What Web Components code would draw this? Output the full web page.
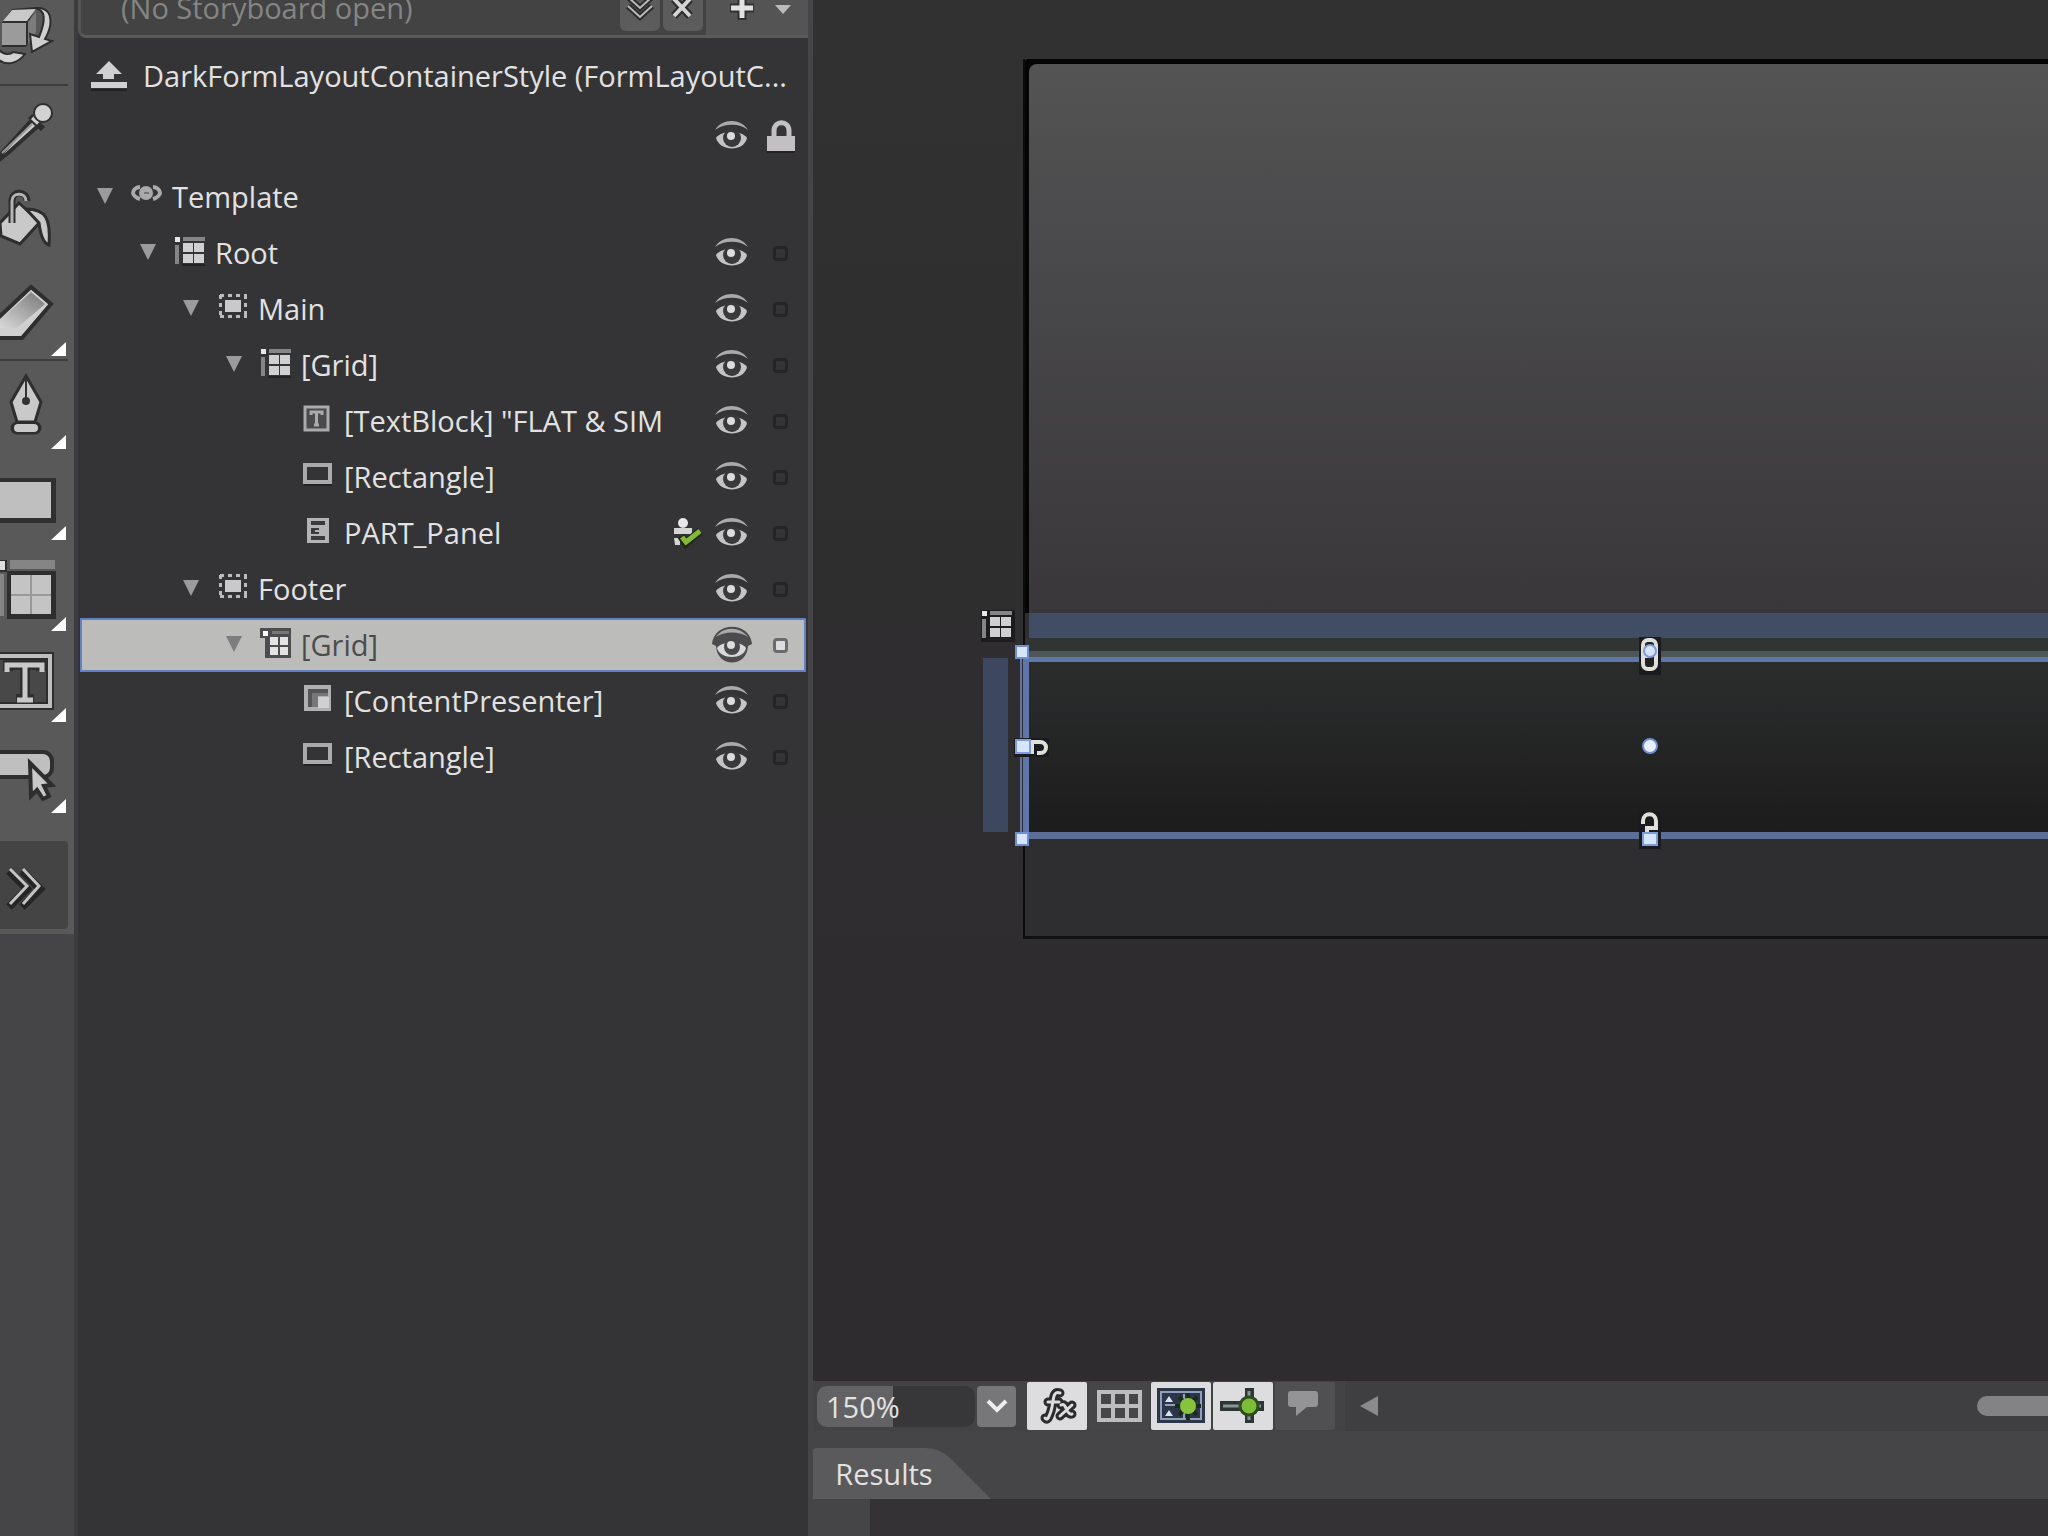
<!DOCTYPE html>
<html lang="en">
<head>
<meta charset="utf-8">
<title>Style editor</title>
<style>
body {
    margin: 0;
    background: #302f31;
    color: #e2e2e2;
    font-family: "Open Sans", "Noto Sans", sans-serif;
    font-size: 29px;
    line-height: 32px;
}
</style>
</head>
<body>
<style-editor></style-editor>

<script>
const SHARED = `
*, ::before, ::after {
    box-sizing: border-box;
}

button {
    display: flex;
    align-items: center;
    justify-content: center;
    margin: 0;
    padding: 0;
    border: 0;
    background: none;
    color: inherit;
    font: inherit;
}

svg {
    display: block;
    flex: none;
}
`

const define = (name, html, setup) => {
    const template = document.createElement('template')
    template.innerHTML = `<style>${SHARED}</style>${html}`

    window.customElements.define(name, class extends HTMLElement {
        constructor() {
            super()
            this.attachShadow({mode: 'open'})
            this.shadowRoot.appendChild(template.content.cloneNode(true))
            if (setup) setup(this, this.shadowRoot)
        }
    })
}

/* icons: [width, height, markup] */
const GRID = `
<path d="M1 1h5v5H1z" fill="#e8e8e8"/>
<path d="M9 1h22v4H9z" fill="#858487"/>
<path d="M1 9h4v19H1z" fill="#858487"/>
<path d="M9 7h10v9H9zM20 7h10v9H20zM9 18h10v9H9zM20 18h10v9H20z" fill="#d0cfd1"/>
<path d="M8 28h23v2H8z" fill="#222"/>`

const ICONS = {
    template: [32, 30, `
<path d="M9 7C4 7 2 11 2 13s3 5 7 6M22 7c5 0 7 4 7 6s-3 5-7 6" fill="none" stroke="#aaa9ab" stroke-width="4"/>
<circle cx="15" cy="13" r="7" fill="#a9a8aa"/>
<path d="M13 13h5" stroke="#777678" stroke-width="2"/>`],
    grid: [32, 30, GRID],
    selgrid: [32, 30, `
<path d="M0 0h31v30H5V10H0z" fill="#4d4d4f"/>
<path d="M3 3h5v5H3z" fill="#fff"/>
<path d="M12 3h17v3H12z" fill="#777"/>
<path d="M10 9h8v8h-8zM20 9h8v8h-8zM10 19h8v8h-8zM20 19h8v8h-8z" fill="#e4e4e4"/>`],
    border: [32, 30, `
<path d="M3 3.500h27M3 24.500h27M3.500 3v22M28.500 3v22" stroke="#bbbabc" stroke-width="3" stroke-dasharray="4 4"/>
<path d="M8 8h16v12H8z" fill="#c9c8ca"/>`],
    text: [32, 30, `
<path d="M2 3h23v23H2z" fill="#4a494b" stroke="#aaa9ab" stroke-width="3"/>
<path d="M8 11V8h11v3M13.500 9v12M11 21h5" fill="none" stroke="#aaa9ab" stroke-width="3"/>`],
    rect: [32, 30, `
<path d="M2 5h25v17H2z" fill="none" stroke="#aaa9ab" stroke-width="4"/>
<path d="M1 25h28" stroke="#222" stroke-width="2"/>`],
    panel: [32, 30, `
<path d="M4 2h22v25H4z" fill="#b4b3b5"/>
<path d="M8 5h14v4H8zM8 12h8v2h-4v2h4v2H8zM8 20h14v4H8z" fill="#3b3a3c"/>`],
    content: [32, 30, `
<path d="M1 1h27v26H1z" fill="#b0afb1"/>
<path d="M5 5h20v4H12v14H5z" fill="#555456"/>
<path d="M9 9h16v3H15v11H9z" fill="#777678"/>
<path d="M15 13h11v11H15z" fill="#d0cfd1"/>`],
    eye: [42, 40, `
<path d="M4 14C11 2 30 2 37 14C29 7 13 7 4 14z" fill="#a9a8aa"/>
<path d="M5 22C10 14 31 14 36 22C33 36 9 36 5 22z" fill="#c4c3c5"/>
<circle cx="21" cy="22" r="9" fill="#39383a"/>
<circle cx="20" cy="20" r="4" fill="#dcdbdd"/>`],
    seleye: [42, 40, `
<path d="M1 19C3 -4 39 -4 41 19L37 21C36 43 6 43 5 21z" fill="#4c4c4e"/>
<path d="M5 12C12 1 29 1 37 12C29 6 13 6 5 12z" fill="#a9a8aa"/>
<path d="M6 23C10 16 31 16 35 23C33 35 9 35 6 23z" fill="#d8d7d9"/>
<circle cx="21" cy="22" r="8" fill="#49484a"/>
<circle cx="20" cy="20" r="4" fill="#dcdbdd"/>`],
    lock: [30, 34, `
<path d="M8 17v-5c0-11 15-11 15 0v5" fill="none" stroke="#c2c0c2" stroke-width="5"/>
<path d="M1 17h28v15H1z" fill="#c2c0c2"/>
<path d="M1 33h28" stroke="#222" stroke-width="2"/>`],
    up: [38, 32, `
<path d="M19 1L32 14H24V19H13V14H6z" fill="#d0cfd1"/>
<path d="M1 22h36v6H1z" fill="#d0cfd1"/>
<path d="M1 30h36" stroke="#222" stroke-width="2"/>`],
    arrow: [18, 18, '<path d="M0 0h16L8 16z" fill="currentColor"/>'],
    part: [32, 32, `
<circle cx="11" cy="6" r="5" fill="#e8e8e8"/>
<path d="M2 11h18v6H2zM2 21h6v7H3z" fill="#d5d5d5"/>
<path d="M9 19l5 7L28 14" fill="none" stroke="#1e2a14" stroke-width="8"/>
<path d="M10 20l4 5L28 14" fill="none" stroke="#84b83a" stroke-width="5"/>`]
}

const TRI = '<path d="M51 88L66 74V88z" fill="#fff"/>'

/* toolbox glyphs share one 74x91 cell */
const TOOLS = {
    orbit: `
<path d="M2 30l10-14 24-2-6 12v22l-4 6H2z" fill="#2e2e2e"/>
<path d="M3 28l9-11 24-1-9 12z" fill="#c9c9c9"/>
<path d="M2 30h24v22H2z" fill="#9b9b9b"/>
<path d="M28 29l8-10v20l-8 12z" fill="#7c7c7c"/>
<path d="M34 15c12 1 12 12 5 29l-9-3 2 18 20-11-7-2c7-12 9-28-4-31z" fill="#cfcfcf" stroke="#2e2e2e" stroke-width="2"/>
<path d="M-1 57c5 5 11 5 14 2l12 2C19 69 8 74-1 67z" fill="#d2d2d2" stroke="#2e2e2e" stroke-width="2"/>`,
    dropper: `
<path d="M-1 70L32 34l6 6L8 67l-9 7z" fill="#c9c9c9" stroke="#2e2e2e" stroke-width="4"/>
<path d="M2 67L32 38" stroke="#999" stroke-width="2"/>
<path d="M30 30l13 13" stroke="#2e2e2e" stroke-width="6"/>
<path d="M34 36l8-9" stroke="#d2d2d2" stroke-width="8"/>
<circle cx="43" cy="27" r="9" fill="#d2d2d2" stroke="#2e2e2e" stroke-width="2"/>`,
    bucket: `
<path d="M0 46L19 26 40 45 20 67 1 59z" fill="#c9c9c9" stroke="#2e2e2e" stroke-width="3"/>
<path d="M12 46V24c0-11 15-10 15 0" fill="none" stroke="#2e2e2e" stroke-width="7"/>
<path d="M12 46V24c0-9 14-9 14 0" fill="none" stroke="#b4b4b4" stroke-width="3"/>
<path d="M26 32c20 0 25 10 23 36-7-2-9-14-10-22z" fill="#c9c9c9" stroke="#2e2e2e" stroke-width="3"/>`,
    eraser: `
<defs><linearGradient id="g" x1="1" y1="0" x2="0" y2="1"><stop stop-color="#777"/><stop offset="1" stop-color="#ddd"/></linearGradient></defs>
<path d="M-4 52L31 19 51 36 22 70H-4z" fill="#d0d0d0" stroke="#2e2e2e" stroke-width="4"/>
<path d="M-4 56L31 24 45 36 17 60H-4z" fill="url(#g)"/>` + TRI,
    pen: `
<path d="M26 15L41 41 35 61H17L11 41z" fill="#c9c9c9" stroke="#2e2e2e" stroke-width="3"/>
<path d="M26 18v22" stroke="#333" stroke-width="2"/>
<circle cx="26" cy="40" r="4" fill="#333"/>
<path d="M17 67h18" stroke="#2e2e2e" stroke-width="13" stroke-linecap="round"/>
<path d="M18 67h16" stroke="#c9c9c9" stroke-width="8" stroke-linecap="round"/>` + TRI,
    shape: `
<path d="M-2 26h58v45H-2z" fill="#303030"/>
<path d="M-2 30h53v36H-2z" fill="#bfbfbf"/>` + TRI,
    layout: `
<path d="M-2 17h9v12H-2zM7 28h49v48H7z" fill="#2e2e2e"/>
<path d="M-2 18h7v9H-2z" fill="#ddd"/>
<path d="M10 17h45v9H10z" fill="#858585"/>
<path d="M-2 31h6v42H-2z" fill="#858585"/>
<path d="M11 32h40v39H11z" fill="#999"/>
<path d="M11 32h19v19H11zM32 32h19v19H32zM11 53h19v18H11zM32 53h19v18H32z" fill="#c4c4c4"/>` + TRI,
    type: `
<path d="M-4 22h54v50H-4z" fill="#484848" stroke="#2e2e2e" stroke-width="8"/>
<path d="M-4 22h54v50H-4z" fill="none" stroke="#bfbfbf" stroke-width="4"/>
<path d="M8 37V31H41V37M25 31V65M16 65H34" fill="none" stroke="#2e2e2e" stroke-width="10"/>
<path d="M7 38V31H42V38M25 31V65M17 66H33" fill="none" stroke="#c9c9c9" stroke-width="5"/>` + TRI,
    control: `
<rect x="-20" y="27" width="72" height="25" rx="9" fill="#bfbfbf" stroke="#2e2e2e" stroke-width="4"/>
<path d="M30 38L52 60 44 61 49 71 43 74 37 65 31 71z" fill="#c9c9c9" stroke="#2e2e2e" stroke-width="4"/>` + TRI
}

const svg = (w, h, body) => `<svg width="${w}" height="${h}" viewBox="0 0 ${w} ${h}" aria-hidden="true">${body}</svg>`

define('ui-icon', `
<style>
:host {
    display: block;
    flex: none;
}
</style>`, (el, root) => {
    root.innerHTML += svg(...ICONS[el.getAttribute('name')])
})

define('tool-button', `
<style>
:host {
    display: block;
}

button {
    width: 74px;
    height: 91px;
}
</style>
<button type="button"></button>`, (el, root) => {
    const button = root.querySelector('button')
    button.innerHTML = svg(74, 91, TOOLS[el.getAttribute('tool')])
    button.setAttribute('aria-label', el.getAttribute('tool'))
})

define('tool-box', `
<style>
:host {
    display: flex;
    flex-direction: column;
    background: #454446;
    border-right: 4px solid #3c3b3d;
    overflow: hidden;
}

.tools {
    margin-top: -7px;
    padding-bottom: 5px;
    background: #595959;
}

hr {
    height: 2px;
    margin: 0 6px 0 0;
    border: 0;
    background: #3d3d3d;
}

.more {
    width: 68px;
    height: 88px;
    margin-top: 25px;
    border-radius: 0 4px 4px 0;
    background: #444;
}
</style>
<div class="tools">
    <tool-button tool="orbit"></tool-button>
    <hr>
    <tool-button tool="dropper"></tool-button>
    <tool-button tool="bucket"></tool-button>
    <tool-button tool="eraser"></tool-button>
    <hr>
    <tool-button tool="pen"></tool-button>
    <tool-button tool="shape"></tool-button>
    <tool-button tool="layout"></tool-button>
    <tool-button tool="type"></tool-button>
    <tool-button tool="control"></tool-button>
    <button class="more" type="button" aria-label="More tools">
        <svg width="68" height="88" viewBox="0 0 68 88">
            <path d="M9 30L27 48 9 66M22 30L40 48 22 66" fill="none" stroke="#252525" stroke-width="8"/>
            <path d="M10 28L27 45 10 63M23 28L39 45 23 63" fill="none" stroke="#c4c4c4" stroke-width="3"/>
        </svg>
    </button>
</div>`)

define('storyboard-bar', `
<style>
:host {
    display: flex;
    align-items: flex-start;
    height: 38px;
    border-bottom: 3px solid #5a5a5a;
    border-left: 3px solid #555;
    border-radius: 0 0 0 8px;
    background: #424342;
    overflow: hidden;
}

.name {
    flex: 1;
    margin-top: -8px;
    padding-left: 40px;
    color: #858585;
}

.chip {
    width: 40px;
    height: 31px;
    margin-right: 3px;
    border-radius: 0 0 6px 6px;
    background: #5c5c5c;
}

.add {
    display: flex;
    align-items: flex-start;
    width: 102px;
    height: 35px;
    padding-left: 22px;
    gap: 18px;
    background: #545454;
}
</style>
<span class="name">(No Storyboard open)</span>
<button class="chip" type="button" aria-label="Open storyboard">
    <svg width="40" height="31" viewBox="0 0 40 31">
        <path d="M8-3L20 8 32-3M8 6L20 17 32 6" fill="none" stroke="#2d2d2d" stroke-width="6"/>
        <path d="M8-3L20 8 32-3M8 6L20 17 32 6" fill="none" stroke="#bbb" stroke-width="2"/>
    </svg>
</button>
<button class="chip" type="button" aria-label="Close storyboard">
    <svg width="40" height="31" viewBox="0 0 40 31">
        <path d="M11-1L27 16M27-1L11 16" stroke="#2d2d2d" stroke-width="8"/>
        <path d="M11-1L27 16M27-1L11 16" stroke="#d5d5d5" stroke-width="4"/>
    </svg>
</button>
<div class="add">
    <button type="button" aria-label="New storyboard">
        <svg width="28" height="22" viewBox="0 0 28 22">
            <path d="M14-4V20M2 8H26" stroke="#303030" stroke-width="9"/>
            <path d="M14-3V18M3 8H25" stroke="#e2e2e2" stroke-width="5"/>
        </svg>
    </button>
    <button type="button" aria-label="Storyboard menu">
        <svg width="18" height="22" viewBox="0 0 18 22"><path d="M1 5H17L9 14z" fill="#bbb"/></svg>
    </button>
</div>`)

define('tree-row', `
<style>
:host {
    display: grid;
    grid-template-columns: 18px 32px 1fr 32px 49px 35px;
    align-items: center;
    height: 54px;
    margin: 0 2px;
    padding-left: calc(17px + 43px * var(--level));
    padding-right: 18px;
}

:host([selected]) {
    border: 2px solid #6480c4;
    padding-left: calc(15px + 43px * var(--level));
    padding-right: 16px;
    background: #bcbdbb;
    color: #4c4c4e;
}

.toggle {
    color: #9b9a9c;
}

:host([selected]) .toggle {
    color: #7d7d7f;
}

.icon {
    padding: 0 0 4px 16px;
    width: 48px;
}

.label {
    min-width: 0;
    padding-left: 25px;
    white-space: nowrap;
}

.eye {
    justify-self: end;
}

.lock {
    appearance: none;
    justify-self: end;
    width: 15px;
    height: 15px;
    margin: 0;
    border: 3px solid #252426;
    border-radius: 4px;
}

:host([selected]) .lock {
    border-color: #6b6b6d;
    background: #ddd;
}
</style>
<button class="toggle" type="button" aria-label="Expand"></button>
<span class="icon"></span>
<span class="label"><slot></slot></span>
<span><slot name="badge"></slot></span>
<button class="eye" type="button" aria-label="Show or hide"></button>
<input class="lock" type="checkbox" aria-label="Lock">`, (el, root) => {
    const icon = root.querySelector('.icon')
    const selected = el.hasAttribute('selected')

    el.style.setProperty('--level', el.getAttribute('level'))
    icon.innerHTML = svg(...ICONS[el.getAttribute('icon')])
    root.querySelector('.eye').innerHTML = svg(...ICONS[selected ? 'seleye' : 'eye'])

    if (el.hasAttribute('leaf')) root.querySelector('.toggle').style.visibility = 'hidden'
    else root.querySelector('.toggle').innerHTML = svg(...ICONS.arrow)

    if (el.hasAttribute('plain')) {
        root.querySelector('.eye').style.visibility = 'hidden'
        root.querySelector('.lock').style.visibility = 'hidden'
    }
})

define('objects-panel', `
<style>
:host {
    display: flex;
    flex-direction: column;
    background: #343335;
    border-right: 5px solid #454446;
}

.scope {
    display: flex;
    align-items: center;
    gap: 15px;
    padding: 22px 12px 0;
    white-space: nowrap;
}

.heads {
    display: flex;
    align-items: center;
    justify-content: flex-end;
    gap: 13px;
    height: 40px;
    margin: 24px 12px 14px 0;
}

.tree {
    display: flex;
    flex-direction: column;
    gap: 2px;
}
</style>
<storyboard-bar></storyboard-bar>
<div class="scope">
    <button type="button" aria-label="Return scope"><ui-icon name="up"></ui-icon></button>
    <span>DarkFormLayoutContainerStyle (FormLayoutC...</span>
</div>
<div class="heads">
    <ui-icon name="eye"></ui-icon>
    <ui-icon name="lock"></ui-icon>
</div>
<div class="tree">
    <tree-row level="0" icon="template" plain>Template</tree-row>
    <tree-row level="1" icon="grid">Root</tree-row>
    <tree-row level="2" icon="border">Main</tree-row>
    <tree-row level="3" icon="grid">[Grid]</tree-row>
    <tree-row level="4" icon="text" leaf>[TextBlock] "FLAT &amp; SIM</tree-row>
    <tree-row level="4" icon="rect" leaf>[Rectangle]</tree-row>
    <tree-row level="4" icon="panel" leaf>PART_Panel<ui-icon slot="badge" name="part"></ui-icon></tree-row>
    <tree-row level="2" icon="border">Footer</tree-row>
    <tree-row level="3" icon="selgrid" selected>[Grid]</tree-row>
    <tree-row level="4" icon="content" leaf>[ContentPresenter]</tree-row>
    <tree-row level="4" icon="rect" leaf>[Rectangle]</tree-row>
</div>`)

define('art-board', `
<style>
:host {
    display: block;
    min-width: 0;
    padding: 59px 0 0 210px;
    background: linear-gradient(#313131, #2e2c2e 1000px);
    overflow: hidden;
}

.form {
    position: relative;
    height: 880px;
    border-left: 2px solid #0c0c0c;
    border-bottom: 3px solid #111;
    background: #2e2e30;
}

.main {
    height: 554px;
    border-top: 5px solid #050505;
    border-left: 4px solid #050505;
    border-top-left-radius: 4px;
    background: #050505;
}

.main::before {
    content: '';
    display: block;
    height: 100%;
    border-top-left-radius: 8px;
    background: linear-gradient(#545454, #4b4a4c 30%, #393739);
}

.ruler {
    height: 25px;
    margin-left: 4px;
    background: #414d64;
}

.gap {
    height: 19px;
    border-bottom: 6px solid #4d5759;
    background: #303432;
}

.footer {
    height: 182px;
    margin-left: -2px;
    border: solid #6075a8;
    border-width: 5px 0 7px 6px;
    border-bottom-color: #5c6d98;
    background: linear-gradient(#2b2d2d, #1d1c1d);
}

svg {
    position: absolute;
    overflow: visible;
}

.side {
    position: absolute;
    left: -42px;
    top: 599px;
    width: 25px;
    height: 174px;
    background: #3d475f;
}

.grid { left: -44px; top: 551px; }
.marks { left: -13px; top: 582px; }
.mid { left: 615px; top: 576px; }
</style>
<div class="form">
    <div class="main"></div>
    <div class="ruler"></div>
    <div class="gap"></div>
    <div class="footer"></div>
    <div class="side"></div>
    <svg class="grid" width="34" height="32" viewBox="0 0 34 32"><path d="M0 0h34v32H0z" fill="#1c1c1e"/>${GRID}</svg>
    <svg class="marks" width="50" height="210" viewBox="0 0 50 210">
        <path d="M9 17V192" stroke="#6075a8" stroke-width="2"/>
        <path d="M4 5h12v12H4zM4 192h12v12H4z" fill="#d7e6ff" stroke="#6f8fd0" stroke-width="2"/>
        <path d="M2 97h35v19H2z" fill="#191b20"/>
        <path d="M20 113V101h8c8 0 8 11 0 11h-3" fill="none" stroke="#e0e0d8" stroke-width="4"/>
        <path d="M4 99h14v13H4z" fill="#d7e6ff" stroke="#7f9cd8" stroke-width="2"/>
    </svg>
    <svg class="mid" width="20" height="220" viewBox="0 0 20 220">
        <path d="M-1 2h22v38H-1zM-1 176h22v38H-1z" fill="#191b20"/>
        <rect x="3" y="5" width="13" height="29" rx="5" fill="#222" stroke="#e0e0d8" stroke-width="4"/>
        <path d="M3 21h6" stroke="#e0e0d8" stroke-width="4"/>
        <circle cx="10" cy="16" r="6" fill="#d7e6ff" stroke="#7f9cd8" stroke-width="2"/>
        <circle cx="10" cy="111" r="7" fill="#e8f0ff" stroke="#6f8fd0" stroke-width="2"/>
        <path d="M3 189v-3c0-9 13-9 13 0v7H7v6" fill="none" stroke="#e0e0d8" stroke-width="4"/>
        <path d="M3 198h14v12H3z" fill="#d7e6ff" stroke="#7f9cd8" stroke-width="2"/>
    </svg>
</div>`)

define('zoom-bar', `
<style>
:host {
    display: flex;
    align-items: center;
    height: 50px;
    padding-left: 4px;
    background: #434244;
}

input {
    width: 158px;
    height: 41px;
    margin: 0;
    padding: 0 0 0 9px;
    border: 0;
    border-radius: 10px;
    background: linear-gradient(90deg, #626163 76px, #373638 76px);
    color: #e2e2e2;
    font: inherit;
}

.drop {
    width: 39px;
    height: 41px;
    margin: 0 11px 0 2px;
    border-radius: 4px;
    background: #777678;
}

.view {
    width: 60px;
    height: 48px;
    margin-right: 2px;
    border-radius: 2px;
    background: #464547;
}

.on {
    background: #dddcde;
}

.note {
    background: #504f51;
}

.scroll {
    display: flex;
    flex: 1;
    align-items: center;
    justify-content: space-between;
    height: 50px;
    margin-left: 8px;
    padding-left: 15px;
    background: #3f3e40;
}

.thumb {
    width: 71px;
    height: 20px;
    border-radius: 10px 0 0 10px;
    background: #838284;
}
</style>
<input type="text" value="150%" aria-label="Zoom">
<button class="drop" type="button" aria-label="Zoom levels">
    <svg width="24" height="18" viewBox="0 0 24 18"><path d="M3 4L12 13 21 4" fill="none" stroke="#eee" stroke-width="4"/></svg>
</button>
<button class="view on" type="button" aria-label="Effects">
    <svg width="60" height="48" viewBox="0 0 60 48" fill="none" stroke-linecap="round">
        <g stroke="#2b2b2b" stroke-width="9">
            <path d="M33 11C25 8 27 20 24 29S20 38 18 36M21 20H32M34 23C40 20 39 34 45 32M45 23L33 34"/>
        </g>
        <g stroke="#dddcde" stroke-width="3">
            <path d="M33 11C25 8 27 20 24 29S20 38 18 36M21 20H32M34 23C40 20 39 34 45 32M45 23L33 34"/>
        </g>
    </svg>
</button>
<button class="view" type="button" aria-label="Snap grid">
    <svg width="60" height="48" viewBox="0 0 60 48">
        <path d="M10 10H51V38H10zM24 10V38M38 10V38M10 24H51" fill="none" stroke="#bdbcbe" stroke-width="4"/>
    </svg>
</button>
<button class="view on" type="button" aria-label="Snap to gridlines">
    <svg width="60" height="48" viewBox="0 0 60 48">
        <path d="M6 6H54V41H6z" fill="#2c3648"/>
        <path d="M10 10H50V37H10z" fill="none" stroke="#8fa0bd" stroke-width="2"/>
        <path d="M14 23H30M33 12V36" stroke="#8fa0bd" stroke-width="2"/>
        <path d="M14 20h8l-4-6zM14 34h8l-4-6z" fill="#d8e2f4"/>
        <path d="M37 11v27M24 24h26M28 15l18 18M46 15l-18 18" stroke="#1b2a1b" stroke-width="4"/>
        <circle cx="37" cy="24" r="8" fill="#87c43e"/>
    </svg>
</button>
<button class="view on" type="button" aria-label="Snap to lines">
    <svg width="60" height="48" viewBox="0 0 60 48">
        <path d="M7 19H51V29H7zM32 6H41V41H32z" fill="#2c3634"/>
        <path d="M10 24H48M36 9V38" stroke="#8a9694" stroke-width="3"/>
        <circle cx="36" cy="24" r="9" fill="#7bbd36" stroke="#2f4a24" stroke-width="3"/>
    </svg>
</button>
<button class="view note" type="button" aria-label="Annotations">
    <svg width="60" height="48" viewBox="0 0 60 48">
        <path d="M16 9H40q3 0 3 3V22q0 3-3 3H32L21 34V25H16q-3 0-3-3V12q0-3 3-3z" fill="#949395"/>
    </svg>
</button>
<div class="scroll">
    <button type="button" aria-label="Scroll left">
        <svg width="18" height="20" viewBox="0 0 18 20"><path d="M0 10L18 0V20z" fill="#8a898b"/></svg>
    </button>
    <span class="thumb"></span>
</div>`)

define('results-pane', `
<style>
:host {
    display: block;
    padding-top: 17px;
    background: #454446;
}

.tab {
    width: 178px;
    height: 51px;
    padding-right: 36px;
    background: #5a595b;
    clip-path: path("M0 4Q0 0 4 0H112Q126 0 136 9L178 51H0z");
}

.pane {
    height: 37px;
    border-left: 57px solid #454446;
    background: #343234;
}
</style>
<button class="tab" type="button">Results</button>
<div class="pane"></div>`)

define('style-editor', `
<style>
:host {
    display: grid;
    grid-template-columns: 78px 735px minmax(0, 1fr);
    min-height: 100vh;
}

.stage {
    display: grid;
    grid-template-rows: 1fr auto auto;
    min-width: 0;
}
</style>
<tool-box></tool-box>
<objects-panel></objects-panel>
<div class="stage">
    <art-board></art-board>
    <zoom-bar></zoom-bar>
    <results-pane></results-pane>
</div>`)
</script>
</body>
</html>
